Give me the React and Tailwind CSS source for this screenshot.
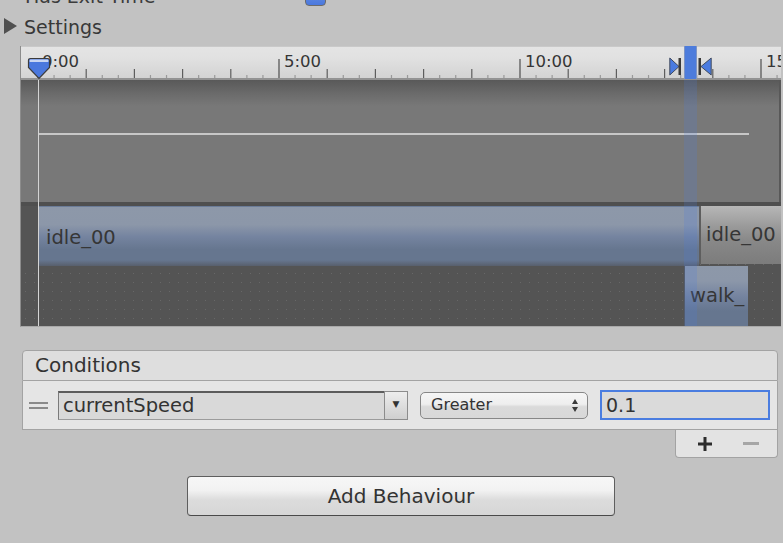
import React from 'react'

const FONT = "font-['DejaVu_Sans',sans-serif]"

function Ruler() {
  const ticks = []
  for (let k = 0; k < 48; k++) {
    const x = 17 + k * (241 / 15)
    let top = 28
    let color = '#9a9a9a'
    if (k % 15 === 0) { top = 12; color = '#4e4e4e' }
    else if (k % 3 === 0) { top = 22; color = '#5e5e5e' }
    ticks.push(<line key={k} x1={x} x2={x} y1={top} y2={31} stroke={color} strokeWidth="1.2" />)
  }
  const labels = [['0:00', 21], ['5:00', 263], ['10:00', 504], ['15:00', 745]]
  return (
    <div className="h-[34px] border-t border-[#c9c9c9] border-b-2 border-b-[#939393] bg-[linear-gradient(to_bottom,#e4e4e4_0%,#e1e1e1_35%,#d3d3d3_100%)]">
      <svg width="760" height="31" className="block">
        {ticks}
        {labels.map(([t, x]) => (
          <text key={t} x={x} y="20" fontSize="16.5" fill="#353535" fontFamily="DejaVu Sans, sans-serif">{t}</text>
        ))}
      </svg>
    </div>
  )
}

function Clip({ label, className }) {
  return (
    <div className={`flex items-center text-[19.5px] text-[#363636] overflow-hidden whitespace-nowrap ${className}`}>
      {label}
    </div>
  )
}

function Timeline() {
  return (
    <div className="relative ml-[20px] mt-[8px] w-[761px] border-l border-[#8c8c8c] border-b border-b-[#a9a9a9] overflow-hidden">
      <Ruler />

      {/* upper track */}
      <div className="h-[122px] flex flex-col bg-[#787878] border-r-2 border-[#585858]">
        <div className="h-[26px] bg-[linear-gradient(to_bottom,#595959,#6a6a6a_50%,#787878)]" />
        <div className="h-[27px]" />
        <div className="ml-[17px] w-[711px] h-[2px] bg-[#c7c7c7]" />
      </div>
      <div className="h-[4px] bg-[#4f4f4f]" />

      {/* clip rows */}
      <div className="bg-[#545454] bg-[radial-gradient(#686868_0.7px,transparent_0.9px)] bg-[length:9px_9px]">
        <div className="h-[60px] flex">
          <div className="w-[18px] bg-[#545454]" />
          <Clip label="idle_00" className="w-[660px] pl-[7px] pt-[2px] border-t border-[#6b7c98] bg-[linear-gradient(to_bottom,#8d98a9_0%,#8c97a9_30%,#7584a0_50%,#66768f_72%,#66768f_90%,#585f6c_100%)]" />
          <Clip label="idle_00" className="w-[82px] pl-[5px] mb-[2px] border-l-2 border-[#5e5e5e] bg-[linear-gradient(to_bottom,#b7b7b7_0%,#9a9a9a_35%,#888888_60%,#7c7c7c_100%)]" />
        </div>
        <div className="h-[60px] flex">
          <div className="w-[664px]" />
          <Clip label="walk_" className="w-[63px] pl-[5px] bg-[linear-gradient(to_bottom,#8d98a9_0%,#8c97a9_25%,#7584a0_50%,#66768f_75%,#66768f_100%)]" />
        </div>
      </div>

      {/* playhead */}
      <div className="absolute left-[17px] top-[34px] bottom-0 w-px bg-[#d4d4d4]" />
      <svg className="absolute left-[6px] top-[11px]" width="24" height="23" viewBox="0 0 24 23">
        <path d="M3.5 1.5 H20.5 Q22.5 1.5 22.5 3.5 V10.5 L12 21.5 L1.5 10.5 V3.5 Q1.5 1.5 3.5 1.5 Z" fill="#4a78de" stroke="#3b3b3b" strokeWidth="1.2" />
        <path d="M3.5 2.6 H20.5 Q21.4 2.6 21.4 3.5 V5 H2.6 V3.5 Q2.6 2.6 3.5 2.6 Z" fill="#c9d6f2" />
      </svg>

      {/* transition */}
      <div className="absolute left-[663px] top-0 w-[13px] h-[33px] bg-[#4d7cdc] border-x border-[#7d94c4]" />
      <div className="absolute left-[663px] top-[34px] bottom-0 w-[13px] bg-[#4a7be0]/20" />
      <svg className="absolute left-[648px] top-[11px]" width="13" height="19" viewBox="0 0 13 19">
        <path d="M0.8 1 L10 9.5 L0.8 18 Z" fill="#4a7be0" stroke="#404b5e" strokeWidth="1" />
        <rect x="9.5" y="1" width="2.5" height="17" fill="#3a3a3a" />
      </svg>
      <svg className="absolute left-[677px] top-[11px]" width="14" height="19" viewBox="0 0 14 19">
        <rect x="0.5" y="1" width="2.5" height="17" fill="#3a3a3a" />
        <path d="M13.2 1 L3 9.5 L13.2 18 Z" fill="#4a7be0" stroke="#404b5e" strokeWidth="1" />
      </svg>
    </div>
  )
}

function Conditions() {
  return (
    <div className="ml-[22px] mt-[23px] w-[756px] flex flex-col">
      <div className="h-[31px] border border-[#a3a3a3] rounded-t-[4px] bg-[#dedede] flex items-center pl-[12px] pb-[1px] text-[20px] text-[#333]">
        Conditions
      </div>
      <div className="h-[49px] border-x border-b border-[#a3a3a3] bg-[#e5e5e5] flex items-center pl-[6px]">
        <div className="w-[19px] flex flex-col gap-[3px]">
          <div className="h-[2px] bg-[#8a8a8a]" />
          <div className="h-[2px] bg-[#8a8a8a]" />
        </div>
        <div className="ml-[10px] w-[350px] h-[29px] flex">
          <div className="flex-1 flex items-center pl-[4px] bg-[#d9d9d9] border-t-2 border-l border-b border-t-[#5c5c5c] border-l-[#7a7a7a] border-b-[#9c9c9c] text-[19.5px] text-[#333]">
            currentSpeed
          </div>
          <div className="w-[24px] flex items-center justify-center border border-[#8c8c8c] bg-[linear-gradient(to_bottom,#ededed,#cfcfcf)] text-[9px] text-[#333]">
            ▼
          </div>
        </div>
        <div className="ml-[12px] w-[168px] h-[27px] rounded-[5px] border border-[#878787] bg-[linear-gradient(to_bottom,#f6f6f6_0%,#eeeeee_45%,#dadada_55%,#d8d8d8_100%)] flex items-center justify-between pl-[10px] pr-[9px] text-[16px] text-[#333]">
          Greater
          <svg width="6" height="13" viewBox="0 0 6 13">
            <path d="M0 5 L3 0 L6 5 Z M0 8 L3 13 L6 8 Z" fill="#3a3a3a" />
          </svg>
        </div>
        <div className="ml-[12px] w-[170px] h-[30px] border-2 border-[#4a7de0] bg-[#dadada] flex items-center pl-[4px] text-[19px] text-[#333]">
          0.1
        </div>
      </div>
      <div className="self-end w-[103px] h-[28px] border-x border-b border-[#a3a3a3] rounded-b-[4px] bg-[#e3e3e3] flex items-center">
        <svg className="ml-[21px]" width="16" height="16" viewBox="0 0 16 16">
          <path d="M6.5 1 H9.5 V6.5 H15 V9.5 H9.5 V15 H6.5 V9.5 H1 V6.5 H6.5 Z" fill="#2c2c2c" />
        </svg>
        <div className="ml-[30px] w-[16px] h-[3px] bg-[#a6a6a6]" />
      </div>
    </div>
  )
}

export default function App() {
  return (
    <div className={`w-[783px] h-[543px] bg-[#c2c2c2] overflow-hidden flex flex-col ${FONT}`}>
      <div className="h-[6px] overflow-hidden flex items-end text-[#3c3c3c]">
        <span className="ml-[25px] text-[19px] leading-[20px] whitespace-nowrap">Has Exit Time</span>
        <div className="ml-[150px] w-[21px] h-[20px] rounded-[4px] border border-[#6b6b6b] bg-[linear-gradient(to_bottom,#6f95e4,#4a78de)]" />
      </div>

      <div className="mt-[8px] h-[24px] flex items-center pl-[4px] text-[19px] text-[#383838]">
        <svg width="13" height="16" viewBox="0 0 13 16">
          <path d="M0 0 L13 8 L0 16 Z" fill="#505050" />
        </svg>
        <span className="ml-[7px] mt-[2px]">Settings</span>
      </div>

      <Timeline />
      <Conditions />

      <button className="ml-[187px] mt-[18px] w-[428px] h-[40px] rounded-[4px] border border-[#5e5e5e] border-b-[#4a4a4a] bg-[linear-gradient(to_bottom,#f7f7f7_0%,#f2f2f2_35%,#dcdcdc_60%,#d6d6d6_100%)] flex items-center justify-center text-[20px] text-[#333]">
        Add Behaviour
      </button>
    </div>
  )
}
